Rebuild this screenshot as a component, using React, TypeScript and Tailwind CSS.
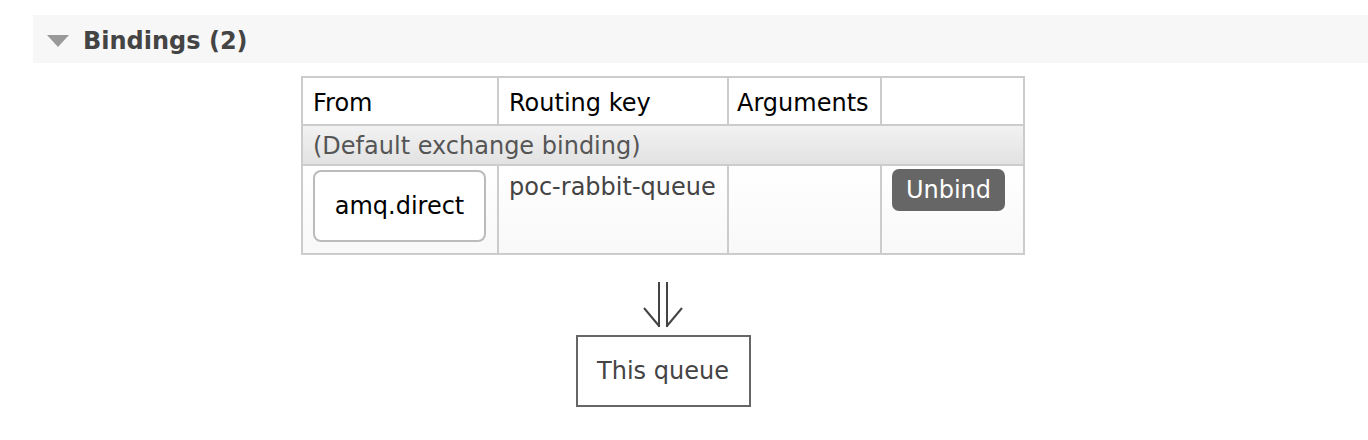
import React from 'react';

const DownArrow = () => (
  <svg width="40" height="46" viewBox="0 0 40 46" className="text-[#444]">
    <line x1="16" y1="0" x2="16" y2="45" stroke="currentColor" strokeWidth="2" />
    <line x1="24" y1="0" x2="24" y2="45" stroke="currentColor" strokeWidth="2" />
    <path d="M1 26 L 16.5 44.5" fill="none" stroke="currentColor" strokeWidth="2" />
    <path d="M23.5 44.5 L 39 26" fill="none" stroke="currentColor" strokeWidth="2" />
  </svg>
);

const App: React.FC = () => {
  return (
    <div className="h-[440px] w-[1368px] bg-white pt-[15px] font-['DejaVu_Sans',Verdana,sans-serif] text-[#444]">
      {/* Section header */}
      <div className="ml-[33px] flex h-[48px] items-center bg-[#f7f7f7] pt-[4px]">
        <div className="ml-[14px] mr-[14px] h-0 w-0 border-x-[11px] border-t-[12px] border-x-transparent border-t-[#999]" />
        <h2 className="text-[24px] font-bold leading-none text-[#444]">Bindings (2)</h2>
      </div>

      <div className="ml-[33px] flex w-[1260px] flex-col items-center pt-[13px]">
        <table className="w-[722px] table-fixed border-collapse border-2 border-[#ccc] text-[24px]">
          <colgroup>
            <col className="w-[196px]" />
            <col className="w-[230px]" />
            <col className="w-[153px]" />
            <col className="w-[143px]" />
          </colgroup>
          <thead>
            <tr className="h-[48px] text-left text-black">
              <th className="border-2 border-[#ccc] px-[10px] pt-[4px] font-normal">From</th>
              <th className="border-2 border-[#ccc] px-[10px] pt-[4px] font-normal">Routing key</th>
              <th className="border-2 border-[#ccc] px-[8px] pt-[4px] font-normal">Arguments</th>
              <th className="border-2 border-[#ccc]" />
            </tr>
          </thead>
          <tbody>
            <tr className="h-[40px]">
              <td colSpan={4} className="border-2 border-[#ccc] bg-gradient-to-b from-[#f2f2f2] to-[#e2e2e2] px-[10px] pt-[2px] text-[#555]">
                (Default exchange binding)
              </td>
            </tr>
            <tr className="h-[89px] bg-gradient-to-b from-white to-[#f8f8f8] align-top">
              <td className="border-2 border-[#ccc] px-[10px] pt-[4px]">
                <div className="flex h-[72px] w-[173px] items-center justify-center rounded-[8px] border-2 border-[#bbb] bg-white text-black">
                  amq.direct
                </div>
              </td>
              <td className="border-2 border-[#ccc] px-[10px] pt-[3px] text-[#444]">poc-rabbit-queue</td>
              <td className="border-2 border-[#ccc]" />
              <td className="border-2 border-[#ccc] px-[10px] pt-[3px]">
                <button className="flex h-[42px] w-[113px] items-center justify-center rounded-[7px] bg-[#666] text-[24px] text-white">
                  Unbind
                </button>
              </td>
            </tr>
          </tbody>
        </table>

        <div className="mt-[27px] h-[46px]">
          <DownArrow />
        </div>

        <div className="mt-[7px] flex h-[72px] w-[175px] items-center justify-center border-2 border-[#666] text-[24px] text-[#444]">
          This queue
        </div>
      </div>
    </div>
  );
};

export default App;
